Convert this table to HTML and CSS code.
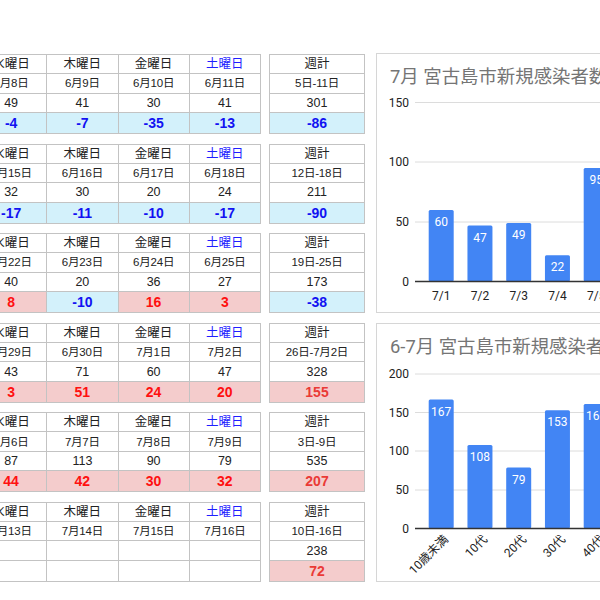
FILE: index.html
```html
<!DOCTYPE html>
<html lang="ja">
<head>
<meta charset="utf-8">
<title>宮古島市新規感染者数</title>
<link rel="stylesheet" href="styles.css">
</head>
<body>
<div class="page">
  <div class="tables">
    <div class="block">
      <table class="days">
        <tr class="r-head"><td>水曜日</td><td>木曜日</td><td>金曜日</td><td class="sat">土曜日</td></tr>
        <tr class="r-date"><td>6月8日</td><td>6月9日</td><td>6月10日</td><td>6月11日</td></tr>
        <tr class="r-num"><td>49</td><td>41</td><td>30</td><td>41</td></tr>
        <tr class="r-diff"><td class="dn">-4</td><td class="dn">-7</td><td class="dn">-35</td><td class="dn">-13</td></tr>
      </table>
      <table class="week">
        <tr class="r-head"><td>週計</td></tr>
        <tr class="r-date"><td>5日-11日</td></tr>
        <tr class="r-num"><td>301</td></tr>
        <tr class="r-diff"><td class="dn">-86</td></tr>
      </table>
    </div>
    <div class="block">
      <table class="days">
        <tr class="r-head"><td>水曜日</td><td>木曜日</td><td>金曜日</td><td class="sat">土曜日</td></tr>
        <tr class="r-date"><td>6月15日</td><td>6月16日</td><td>6月17日</td><td>6月18日</td></tr>
        <tr class="r-num"><td>32</td><td>30</td><td>20</td><td>24</td></tr>
        <tr class="r-diff"><td class="dn">-17</td><td class="dn">-11</td><td class="dn">-10</td><td class="dn">-17</td></tr>
      </table>
      <table class="week">
        <tr class="r-head"><td>週計</td></tr>
        <tr class="r-date"><td>12日-18日</td></tr>
        <tr class="r-num"><td>211</td></tr>
        <tr class="r-diff"><td class="dn">-90</td></tr>
      </table>
    </div>
    <div class="block">
      <table class="days">
        <tr class="r-head"><td>水曜日</td><td>木曜日</td><td>金曜日</td><td class="sat">土曜日</td></tr>
        <tr class="r-date"><td>6月22日</td><td>6月23日</td><td>6月24日</td><td>6月25日</td></tr>
        <tr class="r-num"><td>40</td><td>20</td><td>36</td><td>27</td></tr>
        <tr class="r-diff"><td class="up">8</td><td class="dn">-10</td><td class="up">16</td><td class="up">3</td></tr>
      </table>
      <table class="week">
        <tr class="r-head"><td>週計</td></tr>
        <tr class="r-date"><td>19日-25日</td></tr>
        <tr class="r-num"><td>173</td></tr>
        <tr class="r-diff"><td class="dn">-38</td></tr>
      </table>
    </div>
    <div class="block">
      <table class="days">
        <tr class="r-head"><td>水曜日</td><td>木曜日</td><td>金曜日</td><td class="sat">土曜日</td></tr>
        <tr class="r-date"><td>6月29日</td><td>6月30日</td><td>7月1日</td><td>7月2日</td></tr>
        <tr class="r-num"><td>43</td><td>71</td><td>60</td><td>47</td></tr>
        <tr class="r-diff"><td class="up">3</td><td class="up">51</td><td class="up">24</td><td class="up">20</td></tr>
      </table>
      <table class="week">
        <tr class="r-head"><td>週計</td></tr>
        <tr class="r-date"><td>26日-7月2日</td></tr>
        <tr class="r-num"><td>328</td></tr>
        <tr class="r-diff"><td class="up soft">155</td></tr>
      </table>
    </div>
    <div class="block">
      <table class="days">
        <tr class="r-head"><td>水曜日</td><td>木曜日</td><td>金曜日</td><td class="sat">土曜日</td></tr>
        <tr class="r-date"><td>7月6日</td><td>7月7日</td><td>7月8日</td><td>7月9日</td></tr>
        <tr class="r-num"><td>87</td><td>113</td><td>90</td><td>79</td></tr>
        <tr class="r-diff"><td class="up">44</td><td class="up">42</td><td class="up">30</td><td class="up">32</td></tr>
      </table>
      <table class="week">
        <tr class="r-head"><td>週計</td></tr>
        <tr class="r-date"><td>3日-9日</td></tr>
        <tr class="r-num"><td>535</td></tr>
        <tr class="r-diff"><td class="up soft">207</td></tr>
      </table>
    </div>
    <div class="block">
      <table class="days">
        <tr class="r-head"><td>水曜日</td><td>木曜日</td><td>金曜日</td><td class="sat">土曜日</td></tr>
        <tr class="r-date"><td>7月13日</td><td>7月14日</td><td>7月15日</td><td>7月16日</td></tr>
        <tr class="r-num"><td></td><td></td><td></td><td></td></tr>
        <tr class="r-diff"><td></td><td></td><td></td><td></td></tr>
      </table>
      <table class="week">
        <tr class="r-head"><td>週計</td></tr>
        <tr class="r-date"><td>10日-16日</td></tr>
        <tr class="r-num"><td>238</td></tr>
        <tr class="r-diff"><td class="up soft">72</td></tr>
      </table>
    </div>
  </div>

  <div class="charts">
    <div class="card card-1">
      <div class="card-title">7月 宮古島市新規感染者数</div>
      <svg class="chart" width="300" height="223" viewBox="0 0 300 223">
        <g class="grid">
          <line x1="38" y1="13.5" x2="300" y2="13.5"/>
          <line x1="38" y1="73" x2="300" y2="73"/>
          <line x1="38" y1="133" x2="300" y2="133"/>
        </g>
        <g class="ylab">
          <text x="32" y="17.5">150</text>
          <text x="32" y="77">100</text>
          <text x="32" y="137">50</text>
          <text x="32" y="196.5">0</text>
        </g>
        <g class="bars">
          <rect x="51.7" y="120.9" width="25" height="71.6" rx="1.5"/>
          <rect x="90.45" y="136.4" width="25" height="56.1" rx="1.5"/>
          <rect x="129.2" y="134" width="25" height="58.5" rx="1.5"/>
          <rect x="167.95" y="166.2" width="25" height="26.3" rx="1.5"/>
          <rect x="206.7" y="79.1" width="25" height="113.4" rx="1.5"/>
        </g>
        <line class="base" x1="38" y1="192.5" x2="300" y2="192.5"/>
        <g class="vlab">
          <text x="64.2" y="137">60</text>
          <text x="102.95" y="152.5">47</text>
          <text x="141.7" y="150">49</text>
          <text x="180.45" y="182.2">22</text>
          <text x="219.2" y="95.1">95</text>
        </g>
        <g class="xlab">
          <text x="64.2" y="211">7/1</text>
          <text x="102.95" y="211">7/2</text>
          <text x="141.7" y="211">7/3</text>
          <text x="180.45" y="211">7/4</text>
          <text x="219.2" y="211">7/5</text>
        </g>
      </svg>
    </div>

    <div class="card card-2">
      <div class="card-title">6-7月 宮古島市新規感染者数</div>
      <svg class="chart" width="300" height="222" viewBox="0 0 300 222">
        <g class="grid">
          <line x1="38" y1="15" x2="300" y2="15"/>
          <line x1="38" y1="53.5" x2="300" y2="53.5"/>
          <line x1="38" y1="92" x2="300" y2="92"/>
          <line x1="38" y1="131" x2="300" y2="131"/>
        </g>
        <g class="ylab">
          <text x="32" y="19">200</text>
          <text x="32" y="57.5">150</text>
          <text x="32" y="96">100</text>
          <text x="32" y="135">50</text>
          <text x="32" y="173.5">0</text>
        </g>
        <g class="bars">
          <rect x="51.7" y="40.5" width="25" height="129" rx="1.5"/>
          <rect x="90.45" y="86.1" width="25" height="83.4" rx="1.5"/>
          <rect x="129.2" y="108.5" width="25" height="61" rx="1.5"/>
          <rect x="167.95" y="51.3" width="25" height="118.2" rx="1.5"/>
          <rect x="206.7" y="45.1" width="25" height="124.4" rx="1.5"/>
        </g>
        <line class="base" x1="38" y1="169.5" x2="300" y2="169.5"/>
        <g class="vlab">
          <text x="64.2" y="56.5">167</text>
          <text x="102.95" y="102.1">108</text>
          <text x="141.7" y="124.5">79</text>
          <text x="180.45" y="67.3">153</text>
          <text x="219.2" y="61.1">161</text>
        </g>
        <g class="xlab rot">
          <text transform="translate(72 181) rotate(-45)">10歳未満</text>
          <text transform="translate(111 181) rotate(-45)">10代</text>
          <text transform="translate(150 181) rotate(-45)">20代</text>
          <text transform="translate(189 181) rotate(-45)">30代</text>
          <text transform="translate(228 181) rotate(-45)">40代</text>
        </g>
      </svg>
    </div>
  </div>
</div>
</body>
</html>
```

FILE: styles.css
```css
html, body {
  margin: 0;
  padding: 0;
  width: 600px;
  height: 600px;
  overflow: hidden;
  background: #ffffff;
}

body {
  font-family: "Liberation Sans", "Noto Sans CJK JP", sans-serif;
  color: #222222;
}

.page {
  display: flex;
  padding-top: 53px;
}

.tables {
  display: flex;
  flex-direction: column;
  gap: 9.6px;
  margin-left: -25px;
  margin-top: 1px;
  flex: none;
}

.block {
  display: flex;
  gap: 8px;
  align-items: flex-start;
}

table {
  border-collapse: collapse;
  table-layout: fixed;
}

table.days {
  width: 286px;
}

table.week {
  width: 96px;
}

td {
  border: 1px solid #c3c3c3;
  text-align: center;
  vertical-align: middle;
  padding: 0;
  white-space: nowrap;
  overflow: hidden;
  color: #222222;
  line-height: 16px;
}

.r-head td {
  height: 18px;
  font-size: 12.5px;
}

.r-date td {
  height: 18.5px;
  font-size: 11.5px;
  letter-spacing: -0.2px;
}

.r-num td {
  height: 18.5px;
  font-size: 12.5px;
}

.r-diff td {
  height: 20px;
  font-size: 14px;
  font-weight: bold;
}

td.sat {
  color: #1f1fff;
}

td.dn {
  background: #d3f1fb;
  color: #1212f2;
}

td.up {
  background: #f4cccc;
  color: #ff1010;
}

td.up.soft {
  color: #ea3a36;
}

.charts {
  display: flex;
  flex-direction: column;
  gap: 10px;
  margin-left: 11px;
  flex: none;
}

.card {
  width: 300px;
  border: 1px solid #d6d6d6;
  display: flex;
  flex-direction: column;
  background: #ffffff;
}

.card-1 {
  height: 258px;
}

.card-2 {
  height: 257px;
}

.card-title {
  height: 35px;
  box-sizing: border-box;
  padding: 11px 0 0 13px;
  line-height: 24px;
  font-family: "Roboto", "Noto Sans CJK JP", sans-serif;
  font-size: 18.4px;
  color: #757575;
  white-space: nowrap;
}

.chart {
  display: block;
  flex: none;
}

.chart .grid line {
  stroke: #dcdcdc;
  stroke-width: 1;
}

.chart .base {
  stroke: #333333;
  stroke-width: 1.4;
}

.chart .bars rect {
  fill: #4285f4;
}

.chart text {
  font-family: "Roboto", "Noto Sans CJK JP", sans-serif;
  font-size: 12px;
}

.chart .ylab text {
  text-anchor: end;
  fill: #222222;
}

.chart .vlab text {
  text-anchor: middle;
  fill: #ffffff;
}

.chart .xlab text {
  text-anchor: middle;
  fill: #222222;
}

.chart .xlab.rot text {
  text-anchor: end;
}
```
